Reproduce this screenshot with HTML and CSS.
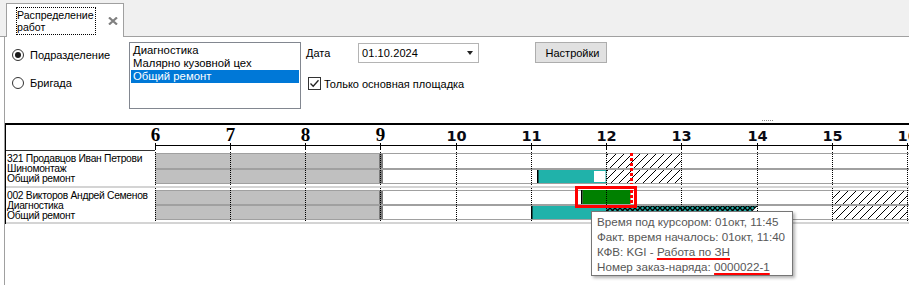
FILE: index.html
```html
<!DOCTYPE html>
<html lang="ru">
<head>
<meta charset="utf-8">
<title>Распределение работ</title>
<link rel="stylesheet" href="styles.css">
</head>
<body>
<div class="tabstrip">
  <div class="tab">
    <div class="tab-title">Распределение<br>работ</div>
    <svg class="tab-close" width="10" height="8" viewBox="0 0 10 8"><path d="M1,0.5 L9,7.5 M9,0.5 L1,7.5" stroke="#808080" stroke-width="2.2"/></svg>
  </div>
</div>
<div class="panel">
  <div class="controls">
    <div class="radios">
      <label class="radio-item"><span class="radio checked"></span>Подразделение</label>
      <label class="radio-item"><span class="radio"></span>Бригада</label>
    </div>
    <div class="listbox">
      <div class="lb-item">Диагностика</div>
      <div class="lb-item">Малярно кузовной цех</div>
      <div class="lb-item selected">Общий ремонт</div>
    </div>
    <div class="right">
      <div class="date-row">
        <span class="date-label">Дата</span>
        <div class="combo"><span class="combo-text">01.10.2024</span><span class="combo-arrow"></span></div>
        <div class="button">Настройки</div>
      </div>
      <label class="check-row"><span class="checkbox"><svg width="11" height="11" viewBox="0 0 11 11"><path d="M1.5,5.5 L4.2,8.3 L9.5,2.2" fill="none" stroke="#222" stroke-width="1.3"/></svg></span>Только основная площадка</label>
    </div>
  </div>
  <div class="splitter"><span class="grip"></span></div>
  <div class="gantt">
    <div class="g-header">
      <div class="g-corner"></div>
      <svg class="g-axis" width="760" height="26">
        <defs>
          <pattern id="hatch" width="8" height="8" patternUnits="userSpaceOnUse">
            <rect width="8" height="8" fill="#fff"/>
            <path d="M-1,1 L1,-1 M0,8 L8,0 M7,9 L9,7" stroke="#000" stroke-width="1"/>
          </pattern>
          <pattern id="cross" width="5" height="5" patternUnits="userSpaceOnUse">
            <rect width="5" height="5" fill="#20b2aa"/>
            <path d="M0,0 L5,5 M5,0 L0,5" stroke="#000" stroke-width="1.3"/>
          </pattern>
        </defs>
        <rect x="0" y="20" width="760" height="1" fill="#000"/>
        <g stroke="#000" stroke-width="1">
          <line x1="0.5" y1="18" x2="0.5" y2="25"/>
          <line x1="75.5" y1="18" x2="75.5" y2="25"/>
          <line x1="150.5" y1="18" x2="150.5" y2="25"/>
          <line x1="225.5" y1="18" x2="225.5" y2="25"/>
          <line x1="301.5" y1="18" x2="301.5" y2="25"/>
          <line x1="376.5" y1="18" x2="376.5" y2="25"/>
          <line x1="451.5" y1="18" x2="451.5" y2="25"/>
          <line x1="526.5" y1="18" x2="526.5" y2="25"/>
          <line x1="602.5" y1="18" x2="602.5" y2="25"/>
          <line x1="677.5" y1="18" x2="677.5" y2="25"/>
          <line x1="752.5" y1="18" x2="752.5" y2="25"/>
        </g>
        <text class="hl-serif" x="0.5" y="15.5">6</text>
        <text class="hl-serif" x="75.5" y="15.5">7</text>
        <text class="hl-serif" x="150.5" y="15.5">8</text>
        <text class="hl-serif" x="225.5" y="15.5">9</text>
        <text class="hl-sans" x="301.5" y="16">10</text>
        <text class="hl-sans" x="376.5" y="16">11</text>
        <text class="hl-sans" x="451.5" y="16">12</text>
        <text class="hl-sans" x="526.5" y="16">13</text>
        <text class="hl-sans" x="602.5" y="16">14</text>
        <text class="hl-sans" x="677.5" y="16">15</text>
        <text class="hl-sans" x="752.5" y="16">16</text>
      </svg>
    </div>

    <div class="g-row r1">
      <div class="g-label">321 Продавцов Иван Петрови<br>Шиномонтаж<br>Общий ремонт</div>
      <svg class="g-chart" width="760" height="35">
        <rect x="0" y="2" width="226" height="31" fill="#c0c0c0"/>
        <rect x="224" y="2" width="4" height="31" fill="#7c7c7c"/>
        <rect x="451.5" y="2" width="75" height="31" fill="url(#hatch)"/>
        <rect x="0" y="2" width="760" height="1" fill="#a0a0a0"/>
        <rect x="0" y="17" width="760" height="2" fill="#a0a0a0"/>
        <rect x="0" y="32" width="760" height="1" fill="#a0a0a0"/>
        <rect x="382" y="19" width="57" height="13" fill="#20b2aa"/>
        <rect x="438.5" y="19.5" width="12.5" height="12" fill="#fff" stroke="#20b2aa" stroke-width="1"/>
        <rect x="382" y="19" width="1.5" height="13" fill="#000"/>
        <g stroke="#000" stroke-width="1" stroke-dasharray="1 1">
          <line x1="0.5" y1="1" x2="0.5" y2="35"/>
          <line x1="75.5" y1="1" x2="75.5" y2="35"/>
          <line x1="150.5" y1="1" x2="150.5" y2="35"/>
          <line x1="225.5" y1="1" x2="225.5" y2="35"/>
          <line x1="301.5" y1="1" x2="301.5" y2="35"/>
          <line x1="376.5" y1="1" x2="376.5" y2="35"/>
          <line x1="451.5" y1="1" x2="451.5" y2="35"/>
          <line x1="526.5" y1="1" x2="526.5" y2="35"/>
          <line x1="602.5" y1="1" x2="602.5" y2="35"/>
          <line x1="677.5" y1="1" x2="677.5" y2="35"/>
          <line x1="752.5" y1="1" x2="752.5" y2="35"/>
        </g>
        <line x1="476.5" y1="2" x2="476.5" y2="33" stroke="#ff0000" stroke-width="3" stroke-dasharray="3 2"/>
      </svg>
    </div>
    <div class="g-sep"></div>
    <div class="g-row r2">
      <div class="g-label">002 Викторов Андрей Семенов<br>Диагностика<br>Общий ремонт</div>
      <svg class="g-chart" width="760" height="34">
        <rect x="0" y="2" width="226" height="30" fill="#c0c0c0"/>
        <rect x="224" y="2" width="4" height="30" fill="#7c7c7c"/>
        <rect x="677.5" y="2" width="75" height="30" fill="url(#hatch)"/>
        <rect x="0" y="2" width="760" height="1" fill="#a0a0a0"/>
        <rect x="0" y="16" width="760" height="2" fill="#a0a0a0"/>
        <rect x="0" y="31" width="760" height="1" fill="#a0a0a0"/>
        <rect x="376" y="18" width="75.5" height="13" fill="#20b2aa"/>
        <path d="M451.5,18 H602 V18.5 L590,31 H451.5 Z" fill="url(#cross)"/>
        <rect x="376" y="18" width="1.5" height="13" fill="#000"/>
        <rect x="427.5" y="2" width="48" height="14" fill="#008000"/>
        <rect x="426" y="2" width="1.5" height="14" fill="#000"/>
        <g stroke="#000" stroke-width="1" stroke-dasharray="1 1">
          <line x1="0.5" y1="0" x2="0.5" y2="34"/>
          <line x1="75.5" y1="0" x2="75.5" y2="34"/>
          <line x1="150.5" y1="0" x2="150.5" y2="34"/>
          <line x1="225.5" y1="0" x2="225.5" y2="34"/>
          <line x1="301.5" y1="0" x2="301.5" y2="34"/>
          <line x1="376.5" y1="0" x2="376.5" y2="34"/>
          <line x1="451.5" y1="0" x2="451.5" y2="34"/>
          <line x1="526.5" y1="0" x2="526.5" y2="34"/>
          <line x1="602.5" y1="0" x2="602.5" y2="34"/>
          <line x1="677.5" y1="0" x2="677.5" y2="34"/>
          <line x1="752.5" y1="0" x2="752.5" y2="34"/>
        </g>
        <line x1="476.5" y1="2" x2="476.5" y2="16" stroke="#ff0000" stroke-width="3" stroke-dasharray="3 2"/>
        <rect x="421.5" y="-0.5" width="59" height="19" fill="none" stroke="#ff0000" stroke-width="3"/>
      </svg>
    </div>
    <div class="g-sep"></div>
  </div>
</div>
<div class="tooltip">
  <div>Время под курсором: 01окт, 11:45</div>
  <div>Факт. время началось: 01окт, 11:40</div>
  <div>КФВ: KGI - <span class="mark">Работа по ЗН</span></div>
  <div>Номер заказ-наряда: <span class="mark">0000022-1</span></div>
</div>
</body>
</html>
```
FILE: styles.css
```css
* { box-sizing: border-box; }
html, body { margin: 0; padding: 0; }
body {
  width: 909px;
  height: 285px;
  overflow: hidden;
  position: relative;
  background: #fff;
  font-family: "Liberation Sans", Arial, sans-serif;
  font-size: 11px;
  color: #000;
}

/* tab strip */
.tabstrip {
  height: 37px;
  background: #f0f0f0;
  border-bottom: 1px solid #a0a0a0;
  display: flex;
  align-items: flex-end;
  padding-left: 6px;
}
.tab {
  width: 118px;
  height: 34px;
  margin-bottom: -1px;
  background: #fff;
  border: 1px solid #a0a0a0;
  border-bottom: none;
  display: flex;
  align-items: flex-start;
}
.tab-title {
  margin: 3px 0 0 9px;
  width: 80px;
  height: 28px;
  border: 1px dotted #000;
  padding: 1px 0 0 0;
  font-size: 10.6px;
  line-height: 12px;
  white-space: nowrap;
}
.tab-close { margin: 13px 0 0 12px; }

/* panel */
.panel {
  margin-left: 4px;
  border-left: 1px solid #a0a0a0;
  height: 248px;
}
.controls {
  display: flex;
  padding-top: 5px;
  height: 73px;
}
.radios {
  width: 124px;
  padding-top: 5px;
  display: flex;
  flex-direction: column;
  gap: 12px;
}
.radio-item {
  display: flex;
  align-items: center;
  height: 16px;
  padding-left: 7px;
}
.radio {
  width: 12px;
  height: 12px;
  border: 1px solid #333;
  border-radius: 50%;
  margin-right: 6px;
  display: flex;
  align-items: center;
  justify-content: center;
  background: #fff;
}
.radio.checked::after {
  content: "";
  width: 6px;
  height: 6px;
  border-radius: 50%;
  background: #1a1a1a;
}
.listbox {
  width: 172px;
  height: 67px;
  border: 1px solid #828790;
  padding: 1px;
  font-size: 11.3px;
}
.lb-item {
  height: 13px;
  line-height: 13px;
  padding-left: 2px;
  white-space: nowrap;
}
.lb-item.selected { background: #0078d7; color: #fff; }

.right { margin-left: 5px; }
.date-row {
  display: flex;
  align-items: center;
  height: 21px;
}
.date-label { width: 52px; }
.combo {
  width: 121px;
  height: 20px;
  border: 1px solid #b4b4b4;
  display: flex;
  align-items: center;
  justify-content: space-between;
  padding: 0 5px 0 3px;
}
.combo-text { letter-spacing: 0.1px; }
.combo-arrow {
  width: 0;
  height: 0;
  border-left: 3.5px solid transparent;
  border-right: 3.5px solid transparent;
  border-top: 4px solid #222;
}
.button {
  margin-left: 56px;
  width: 72px;
  height: 21px;
  background: #e1e1e1;
  border: 1px solid #adadad;
  display: flex;
  align-items: center;
  justify-content: center;
  padding-left: 3px;
}
.check-row {
  display: flex;
  align-items: center;
  margin-top: 14px;
  margin-left: 2px;
  height: 13px;
}
.checkbox {
  width: 13px;
  height: 13px;
  border: 1px solid #333;
  margin-right: 3px;
  display: flex;
  align-items: center;
  justify-content: center;
  background: #fff;
}

.splitter {
  height: 13px;
  padding: 10px 0 0 757px;
}
.grip {
  display: block;
  width: 12px;
  height: 1px;
  background: repeating-linear-gradient(90deg, #8a8a8a 0 1px, transparent 1px 2px);
}

/* gantt */
.gantt {
  border-top: 2px solid #000;
  border-left: 1px solid #000;
  width: 904px;
  overflow: hidden;
}
.g-header { display: flex; height: 26px; }
.g-corner { width: 149px; flex: none; border-bottom: 1px solid #333; }
.g-axis { flex: none; display: block; overflow: visible; }
.hl-serif {
  font-family: "Liberation Serif", "Times New Roman", serif;
  font-weight: bold;
  font-size: 19px;
  text-anchor: middle;
  fill: #000;
}
.hl-sans {
  font-family: "DejaVu Sans", Verdana, sans-serif;
  font-weight: bold;
  font-size: 14.5px;
  text-anchor: middle;
  fill: #0a0a14;
}
.g-row { display: flex; }
.r1 { height: 35px; }
.r2 { height: 34px; }
.g-label {
  width: 149px;
  flex: none;
  padding: 3px 0 0 1px;
  font-size: 10.3px;
  line-height: 10px;
  letter-spacing: -0.3px;
  white-space: nowrap;
  overflow: hidden;
}
.g-chart { flex: none; display: block; overflow: visible; }
.g-sep { height: 2px; background: #d4d4d4; }

/* tooltip */
.tooltip {
  position: absolute;
  left: 591px;
  top: 211px;
  width: 202px;
  height: 65px;
  background: #fff;
  border: 1px solid #767676;
  box-shadow: 2px 2px 3px rgba(0, 0, 0, 0.3);
  padding: 2px 0 0 5px;
  font-size: 11.65px;
  line-height: 15px;
  color: #575757;
  white-space: nowrap;
}
.mark {
  text-decoration: underline;
  text-decoration-color: #ff0000;
  text-decoration-thickness: 2px;
  text-underline-offset: 2px;
}
```
